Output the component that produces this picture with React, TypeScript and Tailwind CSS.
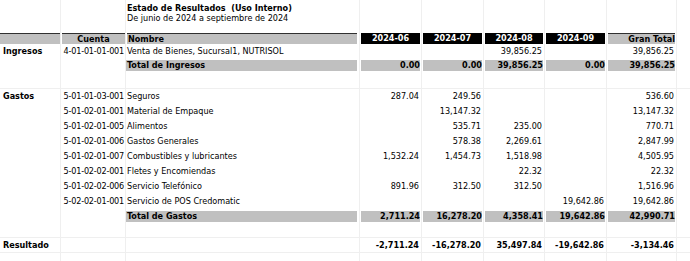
import React from "react";

const W = ["w-[61px]", "w-[65px]", "w-[234px]", "w-[62px]", "w-[62px]", "w-[61px]", "w-[62px]", "w-[70px]"];

const gastos = [
  ["5-01-01-03-001", "Seguros", "287.04", "249.56", "", "", "536.60"],
  ["5-01-02-01-001", "Material de Empaque", "", "13,147.32", "", "", "13,147.32"],
  ["5-01-02-01-005", "Alimentos", "", "535.71", "235.00", "", "770.71"],
  ["5-01-02-01-006", "Gastos Generales", "", "578.38", "2,269.61", "", "2,847.99"],
  ["5-01-02-01-007", "Combustibles y lubricantes", "1,532.24", "1,454.73", "1,518.98", "", "4,505.95"],
  ["5-01-02-02-001", "Fletes y Encomiendas", "", "", "22.32", "", "22.32"],
  ["5-01-02-02-006", "Servicio Telefónico", "891.96", "312.50", "312.50", "", "1,516.96"],
  ["5-02-02-01-001", "Servicio de POS Credomatic", "", "", "", "19,642.86", "19,642.86"],
];

const Cell = ({ i, children, className = "" }: { i: number; children?: React.ReactNode; className?: string }) => (
  <div className={`${W[i]} h-full shrink-0 border-r border-[#efefef] flex items-center whitespace-nowrap ${className}`}>{children}</div>
);

const Row = ({ h, line, children }: { h: string; line?: boolean; children: React.ReactNode }) => (
  <div className={`flex ${h} ${line ? "border-b border-[#efefef]" : ""}`}>{children}</div>
);

// plain data row: label, code, name, 5 values
const DataRow = ({ label, r, bold }: { label?: string; r: string[]; bold?: boolean }) => (
  <Row h="h-[15px]">
    <Cell i={0} className="pl-[3px] font-bold">{label}</Cell>
    <Cell i={1} className="justify-end pr-px tracking-[-0.2px]">{r[0]}</Cell>
    <Cell i={2} className="pl-px">{r[1]}</Cell>
    {r.slice(2).map((v, k) => (
      <Cell key={k} i={k + 3} className={`justify-end pr-[2px] ${bold ? "font-bold" : ""}`}>
        {v}
      </Cell>
    ))}
  </Row>
);

const TotalRow = ({ h, name, vals }: { h: string; name: string; vals: string[] }) => (
  <Row h={h}>
    <Cell i={0} />
    <Cell i={1} />
    <Cell i={2}>
      <div className="h-[11px] w-full mr-[2px] bg-[#c0c0c0] font-bold flex items-center pl-px">{name}</div>
    </Cell>
    {vals.map((v, k) => (
      <Cell key={k} i={k + 3}>
        <div className="h-[11px] w-full ml-px mr-px bg-[#c0c0c0] font-bold flex items-center justify-end">{v}</div>
      </Cell>
    ))}
  </Row>
);

export default function App() {
  return (
    <div className="w-[690px] h-[261px] bg-white text-black text-[9px] leading-none overflow-hidden font-['DejaVu_Sans_Condensed','DejaVu_Sans',sans-serif]">
      <Row h="h-[13px]">
        <Cell i={0} />
        <Cell i={1} />
        <Cell i={2} className="pl-px pt-[3px] font-bold whitespace-pre">
          Estado de Resultados  (Uso Interno)
        </Cell>
        {[3, 4, 5, 6, 7].map((i) => (
          <Cell key={i} i={i} />
        ))}
      </Row>
      <Row h="h-[11px]">
        <Cell i={0} />
        <Cell i={1} />
        <Cell i={2} className="pl-px">De junio de 2024 a septiembre de 2024</Cell>
        {[3, 4, 5, 6, 7].map((i) => (
          <Cell key={i} i={i} />
        ))}
      </Row>
      <Row h="h-[8px]">
        {[0, 1, 2, 3, 4, 5, 6, 7].map((i) => (
          <Cell key={i} i={i} />
        ))}
      </Row>

      {/* header */}
      <Row h="h-[12px]">
        <Cell i={0} className="items-start pt-px">
          <div className="h-[11px] w-full bg-[#c0c0c0] border-t border-[#303030]" />
        </Cell>
        <Cell i={1} className="items-start pt-px">
          <div className="h-[11px] w-full ml-px bg-[#c0c0c0] border-t border-[#303030] font-bold flex items-center justify-center">
            Cuenta
          </div>
        </Cell>
        <Cell i={2} className="items-start pt-px">
          <div className="h-[11px] w-full ml-px mr-[2px] bg-[#c0c0c0] border-t border-[#303030] font-bold flex items-center pl-px">
            Nombre
          </div>
        </Cell>
        {["2024-06", "2024-07", "2024-08", "2024-09"].map((m, k) => (
          <Cell key={m} i={k + 3} className="items-start pt-px">
            <div className="h-[11px] w-full ml-px mr-px bg-black text-white font-bold flex items-center justify-center">
              {m}
            </div>
          </Cell>
        ))}
        <Cell i={7} className="items-start pt-px">
          <div className="h-[11px] w-full ml-px mr-px bg-[#c0c0c0] border-t border-[#303030] font-bold flex items-center justify-end">
            Gran Total
          </div>
        </Cell>
      </Row>

      <DataRow label="Ingresos" r={["4-01-01-01-001", "Venta de Bienes, Sucursal1, NUTRISOL", "", "", "39,856.25", "", "39,856.25"]} />
      <TotalRow h="h-[13px]" name="Total de Ingresos" vals={["0.00", "0.00", "39,856.25", "0.00", "39,856.25"]} />
      <Row h="h-[17px]" line>
        {[0, 1, 2, 3, 4, 5, 6, 7].map((i) => (
          <Cell key={i} i={i} />
        ))}
      </Row>

      {gastos.map((r, k) => (
        <DataRow key={r[0]} label={k === 0 ? "Gastos" : undefined} r={r} />
      ))}
      <TotalRow h="h-[15px]" name="Total de Gastos" vals={["2,711.24", "16,278.20", "4,358.41", "19,642.86", "42,990.71"]} />
      <Row h="h-[14px]" line>
        {[0, 1, 2, 3, 4, 5, 6, 7].map((i) => (
          <Cell key={i} i={i} />
        ))}
      </Row>
      <Row h="h-[15px]" line>
        <Cell i={0} className="pl-[3px] font-bold">Resultado</Cell>
        <Cell i={1} />
        <Cell i={2} />
        {["-2,711.24", "-16,278.20", "35,497.84", "-19,642.86", "-3,134.46"].map((v, k) => (
          <Cell key={k} i={k + 3} className="justify-end pr-[2px] font-bold">
            {v}
          </Cell>
        ))}
      </Row>
      <Row h="h-[8px]">
        {[0, 1, 2, 3, 4, 5, 6, 7].map((i) => (
          <Cell key={i} i={i} />
        ))}
      </Row>
    </div>
  );
}
